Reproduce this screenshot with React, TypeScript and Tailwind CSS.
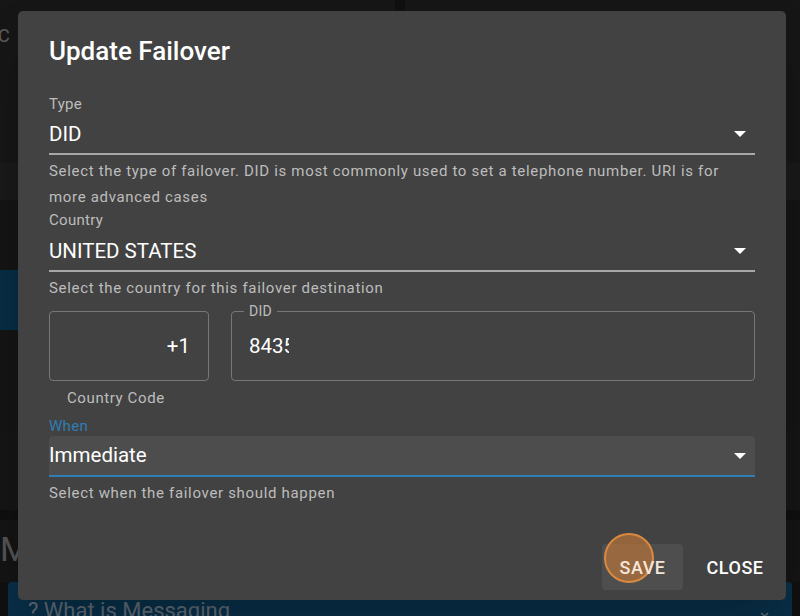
import React from 'react';

const font = { fontFamily: 'Roboto, "Liberation Sans", sans-serif' };

function Caret() {
  return (
    <svg width="14" height="8" viewBox="0 0 14 8" className="shrink-0">
      <path d="M1 1h12L7 7z" fill="#ffffff" />
    </svg>
  );
}

function Backdrop() {
  return (
    <div className="flex h-[616px] w-[800px] flex-col bg-[#1c1c1c]">
      <div className="flex h-[163px] gap-[10px]">
        <div className="flex-1 bg-[#262626] pt-[22px] text-[18px] text-[#9a9a9a]">
          <span className="-ml-[2px]">C</span>
        </div>
        <div className="flex-1 bg-[#262626]" />
      </div>
      <div className="h-[37px] bg-[#2b2b2b]" />
      <div className="flex flex-1 flex-col bg-[#222222] pt-[70px]">
        <div className="h-[60px] w-[30px] bg-[#0d4a72]" />
        <div className="mt-[100px] h-[80px] bg-[#242424]" />
        <div className="h-[10px] bg-[#1a1a1a]" />
        <div className="pt-[12px] text-[34px] leading-none text-[#8a8a8a]">M</div>
      </div>
      <div className="mx-[8px] flex h-[34px] items-end justify-between rounded-t-[4px] bg-[#0e4d76] px-[20px] text-[22px] leading-none text-[#9ab]">
        <span className="translate-y-[6px]">? What is Messaging</span>
        <span className="translate-y-[4px] text-[18px]">⌄</span>
      </div>
    </div>
  );
}

const label = 'text-[15px] leading-[18px] tracking-[0.02em]';
const helper = 'text-[15px] leading-[26px] tracking-[0.045em] text-[#bdbdbd]';

export default function App() {
  return (
    <div className="relative h-[616px] w-[800px] overflow-hidden" style={font}>
      <Backdrop />
      <div className="absolute inset-0 bg-black/40" />
      <div className="absolute left-[18px] top-[11px] flex h-[589px] w-[768px] flex-col rounded-[5px] bg-[#424242] px-[31px] shadow-2xl">
        <h2 className="mt-[24px] text-[26px] font-medium leading-[32px] text-white">Update Failover</h2>

        <div className={`mt-[28px] ${label} text-[#bdbdbd]`}>Type</div>
        <div className="mt-[4px] flex h-[38px] items-center justify-between border-b-2 border-[#a8a8a8] pb-[2px] pr-[8px]">
          <span className="text-[20.5px] text-white">DID</span>
          <Caret />
        </div>
        <p className={`mt-[3px] ${helper}`}>
          Select the type of failover. DID is most commonly used to set a telephone number. URI is for more advanced cases
        </p>

        <div className={`mt-[1px] ${label} text-[#bdbdbd]`}>Country</div>
        <div className="mt-[5px] flex h-[38px] items-center justify-between border-b-2 border-[#a8a8a8] pb-[2px] pr-[8px]">
          <span className="text-[20.5px] text-white">UNITED STATES</span>
          <Caret />
        </div>
        <p className={`mt-[3px] ${helper}`}>Select the country for this failover destination</p>

        <div className="mt-[10px] flex gap-[22px]">
          <div className="flex w-[160px] flex-col">
            <div className="flex h-[70px] items-center justify-end rounded-[4px] border border-[#777777] px-[18px] text-[20.5px] text-white">
              +1
            </div>
            <div className="mt-[8px] pl-[18px] text-[15px] leading-[18px] tracking-[0.04em] text-[#bdbdbd]">Country Code</div>
          </div>
          <div className="relative h-[70px] flex-1 rounded-[4px] border border-[#777777]">
            <span className="absolute -top-[10px] left-[12px] bg-[#424242] px-[5px] text-[14px] leading-[18px] tracking-[0.02em] text-[#bdbdbd]">
              DID
            </span>
            <div className="flex h-full items-center pl-[17px]">
              <span className="w-[40px] overflow-hidden whitespace-nowrap text-[20.5px] text-white">8435</span>
            </div>
          </div>
        </div>

        <div className={`mt-[10px] ${label} text-[#2f7db5]`}>When</div>
        <div className="mt-[1px] flex h-[41px] items-center justify-between rounded-t-[4px] border-b-2 border-[#2f7db5] bg-[#4d4d4d] pr-[8px]">
          <span className="text-[20.5px] text-white">Immediate</span>
          <Caret />
        </div>
        <p className={`mt-[3px] ${helper}`}>Select when the failover should happen</p>

        <div className="-mr-[20px] mt-auto mb-[10px] flex items-center justify-end gap-[12px]">
          <button className="relative h-[46px] w-[81px] rounded-[4px] bg-[#4e4e4e] text-[18px] font-medium tracking-[0.03em] text-[#f5e6d8]">
            <span className="absolute left-[2px] top-[-11px] h-[50px] w-[50px] rounded-full border-2 border-[#d98a40] bg-[#b8733a]/70" />
            <span className="relative">SAVE</span>
          </button>
          <button className="h-[46px] w-[80px] rounded-[4px] text-[18px] font-medium tracking-[0.03em] text-white">CLOSE</button>
        </div>
      </div>
    </div>
  );
}
